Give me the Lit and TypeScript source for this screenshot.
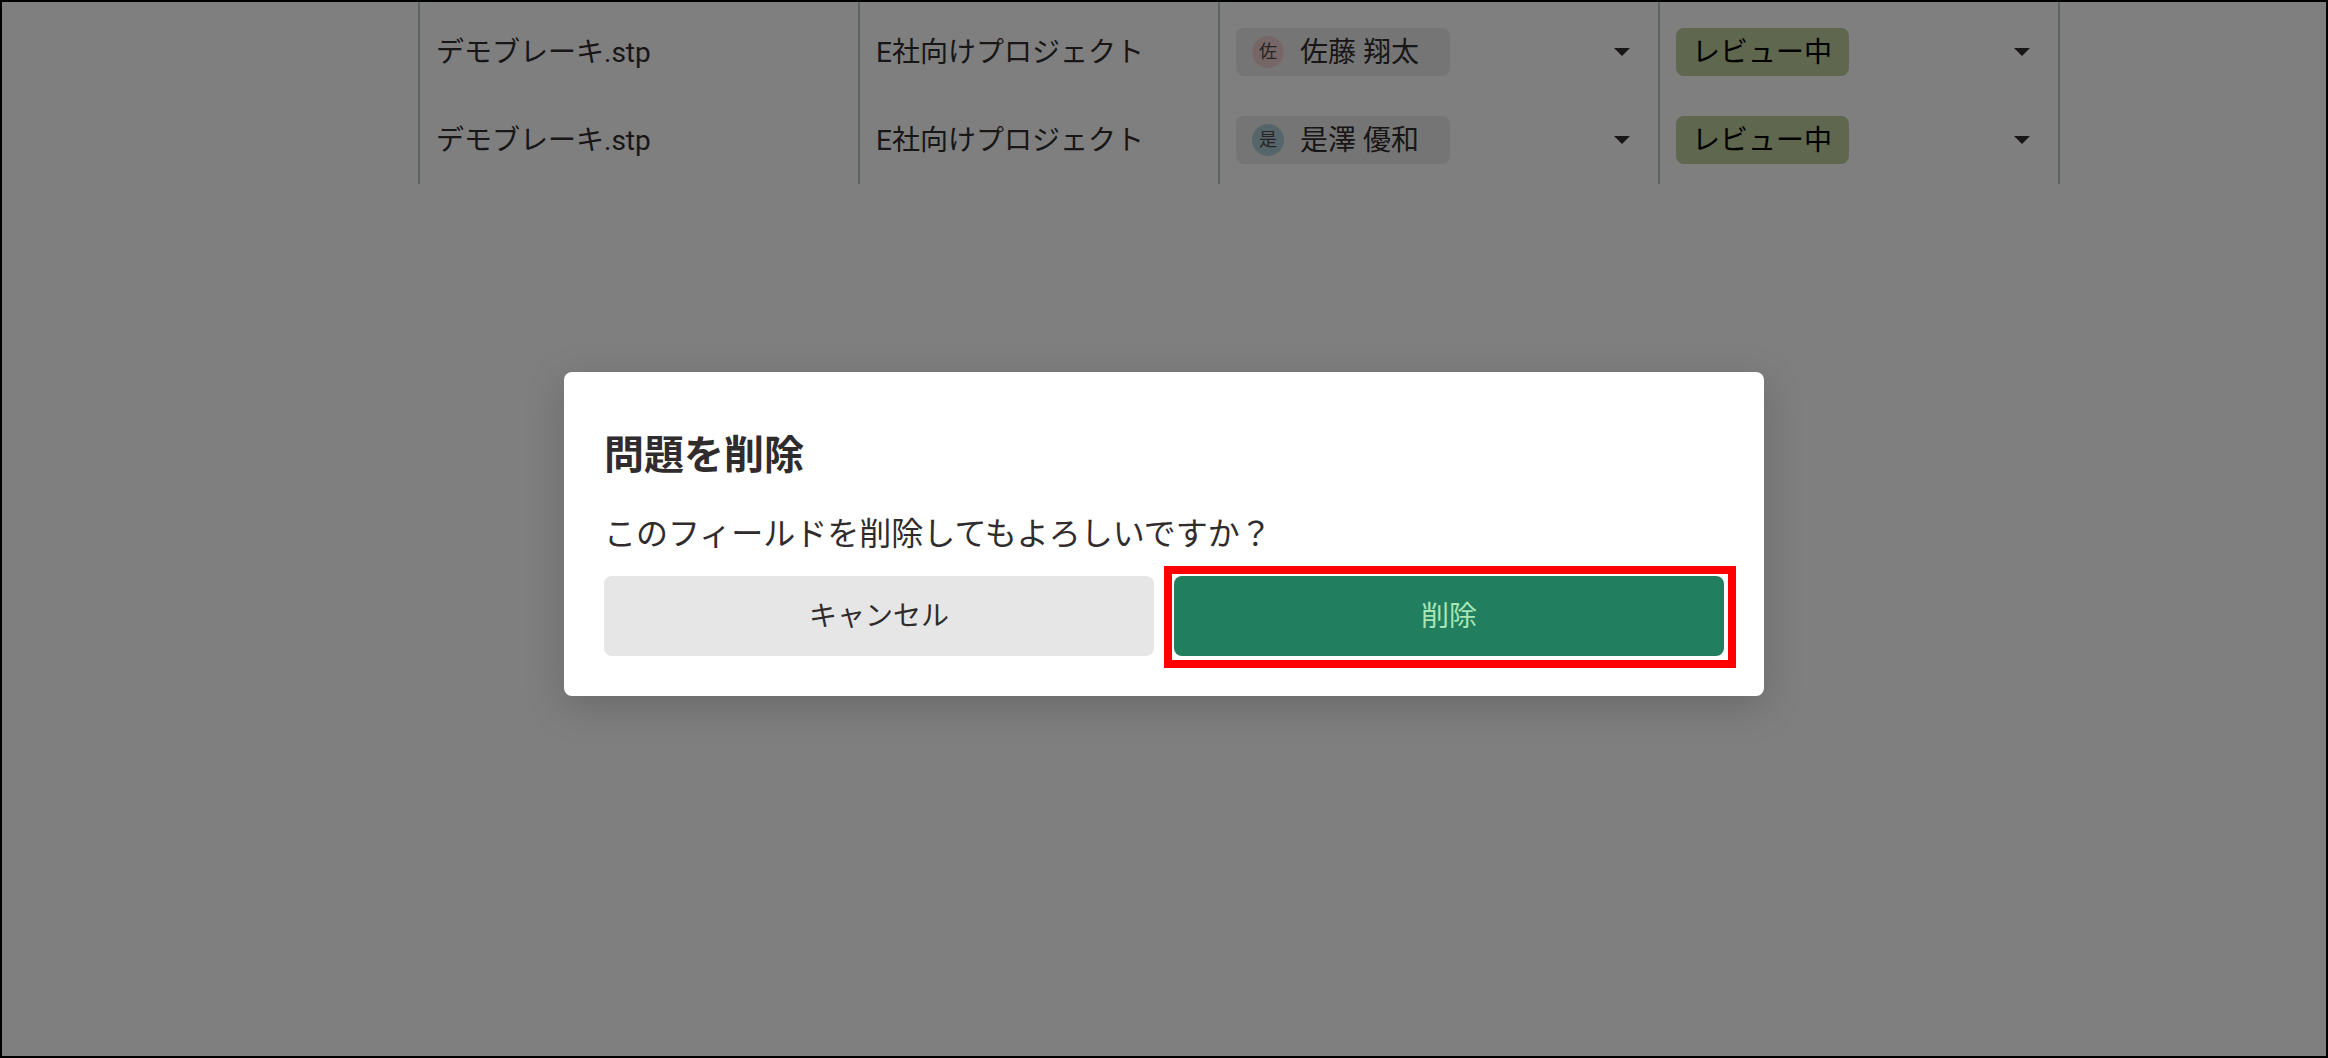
import { LitElement, html, css } from "lit";
import { customElement, property } from "lit/decorators.js";
import { classMap } from "lit/directives/class-map.js";

interface Issue {
  file: string;
  project: string;
  assignee: string;
  tone: "rose" | "sky";
  status: string;
}

const issues: Issue[] = [
  { file: "デモブレーキ.stp", project: "E社向けプロジェクト", assignee: "佐藤 翔太", tone: "rose", status: "レビュー中" },
  { file: "デモブレーキ.stp", project: "E社向けプロジェクト", assignee: "是澤 優和", tone: "sky", status: "レビュー中" },
];

const arrow = html`<svg class="arrow" viewBox="0 0 16 8" aria-hidden="true"><path d="M0 0H16L8 8Z" /></svg>`;

@customElement("issue-table")
export class IssueTable extends LitElement {
  @property({ attribute: false }) rows: Issue[] = [];

  static styles = css`
    :host {
      display: block;
    }
    .table {
      table-layout: fixed;
      width: 2058px;
      border-collapse: separate;
      border-spacing: 0;
      color: #302c2d;
    }
    .lead { width: 418px; }
    .medium { width: 440px; }
    .narrow { width: 360px; }
    .state { width: 400px; }
    .cell {
      box-sizing: border-box;
      height: 88px;
      padding: 0 28px 0 16px;
      border-right: 2px solid #b4c8c3;
      font-weight: 400;
      text-align: left;
      white-space: nowrap;
    }
    .text {
      padding-top: 2px;
    }
    .spacer {
      height: 6px;
      padding: 0;
      border-right: 2px solid #b4c8c3;
    }
    .field {
      display: flex;
      align-items: center;
      justify-content: space-between;
    }
    .chip {
      display: flex;
      align-items: center;
      box-sizing: border-box;
      height: 48px;
      border-radius: 8px;
    }
    .person {
      gap: 16px;
      padding: 0 31px 0 16px;
      background: #ebebeb;
    }
    .status {
      padding: 0 16px;
      background: #bfcf9f;
    }
    .avatar {
      width: 32px;
      height: 32px;
      border-radius: 50%;
      color: #4c4848;
      font-size: 18px;
      line-height: 32px;
      text-align: center;
    }
    .rose { background: #eccfcc; }
    .sky { background: #accbd5; }
    .select {
      appearance: none;
      margin: 0;
      padding: 2px 0 0;
      border: 0;
      background: none;
      color: inherit;
      font: inherit;
      line-height: 40px;
    }
    .status .select {
      color: #000;
    }
    .arrow {
      width: 16px;
      height: 8px;
      fill: #302c2d;
    }
  `;

  render() {
    return html`
      <table class="table">
        <colgroup>
          <col class="lead" />
          <col class="medium" />
          <col class="narrow" />
          <col class="medium" />
          <col class="state" />
        </colgroup>
        <tbody>
          <tr aria-hidden="true">
            ${[0, 1, 2, 3, 4].map(() => html`<td class="spacer"></td>`)}
          </tr>
          ${this.rows.map(
            (row) => html`
              <tr>
                <td class="cell"></td>
                <td class="cell text">${row.file}</td>
                <td class="cell text">${row.project}</td>
                <td class="cell">
                  <label class="field">
                    <span class="chip person">
                      <span class=${classMap({ avatar: true, [row.tone]: true })}>${row.assignee[0]}</span>
                      <select class="select">
                        <option>${row.assignee}</option>
                      </select>
                    </span>
                    ${arrow}
                  </label>
                </td>
                <td class="cell">
                  <label class="field">
                    <span class="chip status">
                      <select class="select">
                        <option>${row.status}</option>
                      </select>
                    </span>
                    ${arrow}
                  </label>
                </td>
              </tr>
            `
          )}
        </tbody>
      </table>
    `;
  }
}

@customElement("delete-dialog")
export class DeleteDialog extends LitElement {
  static styles = css`
    :host {
      display: block;
      width: 1200px;
      max-width: 90%;
    }
    .dialog {
      box-sizing: border-box;
      padding: 60px 40px 40px;
      border-radius: 8px;
      background: #fff;
      color: #302c2d;
      box-shadow: 0 10px 40px rgba(0, 0, 0, 0.18);
    }
    .title {
      margin: 0 0 34px;
      font-size: 40px;
      line-height: 48px;
      font-weight: 700;
    }
    .message {
      margin: 0 0 22px;
      font-size: 32px;
      line-height: 40px;
    }
    .actions {
      display: grid;
      grid-template-columns: 1fr 1fr;
      gap: 20px;
    }
    .slot {
      position: relative;
      display: grid;
    }
    .button {
      height: 80px;
      padding: 2px 0 0;
      border: 0;
      border-radius: 8px;
      font: inherit;
      font-size: 28px;
      cursor: pointer;
    }
    .cancel {
      background: #e6e6e6;
      color: #302c2d;
    }
    .confirm {
      background: #217f60;
      color: #a8e6b4;
    }
    .highlight {
      position: absolute;
      inset: -10px -12px -12px -10px;
      border: 8px solid #f00;
      pointer-events: none;
    }
  `;

  render() {
    return html`
      <section class="dialog" role="dialog" aria-modal="true" aria-labelledby="title">
        <h2 class="title" id="title">問題を削除</h2>
        <p class="message">このフィールドを削除してもよろしいですか？</p>
        <div class="actions">
          <div class="slot">
            <button class="button cancel" type="button">キャンセル</button>
          </div>
          <div class="slot">
            <button class="button confirm" type="button">削除</button>
            <span class="highlight"></span>
          </div>
        </div>
      </section>
    `;
  }
}

@customElement("app-root")
export class AppRoot extends LitElement {
  static styles = css`
    :host {
      display: block;
      font-family: Roboto, "Noto Sans CJK JP", sans-serif;
      font-size: 28px;
      line-height: 40px;
    }
    .page {
      position: relative;
      box-sizing: border-box;
      min-height: 100vh;
      border: 2px solid #000;
      background: #fff;
      overflow: hidden;
    }
    .backdrop {
      position: absolute;
      inset: 0;
      display: flex;
      align-items: center;
      justify-content: center;
      padding-top: 10px;
      background: rgba(0, 0, 0, 0.5);
    }
  `;

  render() {
    return html`
      <main class="page">
        <issue-table .rows=${issues}></issue-table>
        <div class="backdrop"><delete-dialog></delete-dialog></div>
      </main>
    `;
  }
}
